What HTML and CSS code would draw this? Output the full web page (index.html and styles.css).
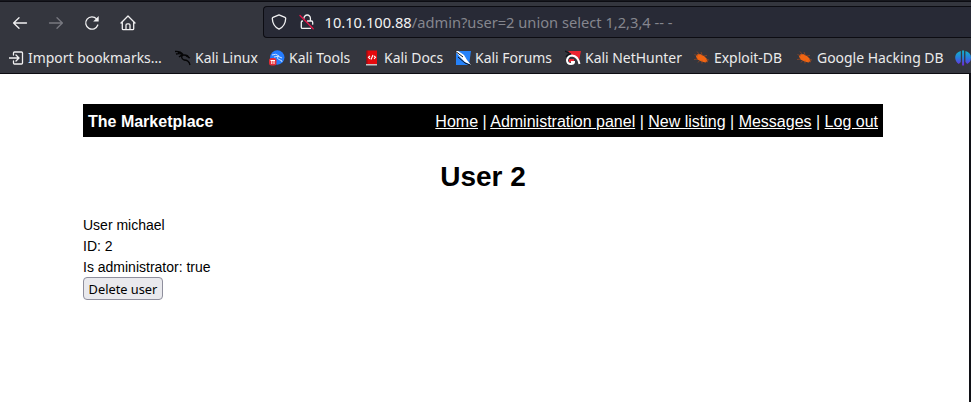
FILE: index.html
```html
<!DOCTYPE html>
<html lang="en">
<head>
<meta charset="utf-8">
<title>User 2</title>
<link rel="stylesheet" href="styles.css">
</head>
<body>
<svg class="defs" width="0" height="0" aria-hidden="true">
  <symbol id="bug" viewBox="0 0 16 16">
    <path d="M3 4.500l3-.5 4 2 3 3 .5 2.500-2 1-4-1-4-2-1.500-3z" fill="#f26512"/>
    <path d="M3 1.500l2.500 3M7 2l1.500 4M.5 4.500L4 6M10 6l3-.5M12 9.500l3 .5M0 9.500l4-.5M4 12.500l2-2.500M8 13.500v-3M11.500 11l2.500 1" stroke="#a34a20" stroke-width=".7" fill="none"/>
  </symbol>
</svg>
<div class="browser">
  <div class="tabs"></div>
  <div class="toolbar">
    <div class="controls">
      <svg width="16" height="16" viewBox="0 0 16 16" class="line"><path d="M14.500 8H1.800M7 2.700L1.600 8 7 13.300"/></svg>
      <svg width="16" height="16" viewBox="0 0 16 16" class="line dim"><path d="M1.500 8h12.700M9 2.700L14.400 8 9 13.300"/></svg>
      <svg width="16" height="16" viewBox="0 0 16 16" class="line"><path d="M13.800 10A6.200 6.200 0 1 1 12.600 3.900"/><path class="solid" d="M14.700 1v5.500H9.200z"/></svg>
      <svg width="16" height="16" viewBox="0 0 16 16" class="line"><path d="M1 8l7-7 7 7M2.300 7v6.700q0 1 1 1h9.400q1 0 1-1V7M6 14.500V10q0-1.200 1.200-1.200h1.600Q10 8.800 10 10v4.500"/></svg>
    </div>
    <div class="urlbar">
      <svg width="16" height="16" viewBox="0 0 16 16" class="line"><path d="M8 .9l6 2.400q.7.300.7 1.200C14.500 9.500 12 13.200 8 15.200 4 13.200 1.500 9.500 1.300 4.500q0-.9.700-1.200z"/></svg>
      <svg width="16" height="16" viewBox="0 0 16 16" class="line lock"><path d="M5 4.200a3.200 3.200 0 0 1 6.400 0V7M8.500 7H12.500q1.200 0 1.200 1.200v2M3.500 7q-1.200.2-1.200 1.200v5q0 1.200 1.200 1.200h8"/><path class="slash" d="M1 1.500L14.200 14.800"/></svg>
      <div class="url"><span class="host">10.10.100.88</span>/admin?user=2 union select 1,2,3,4 -- -</div>
    </div>
  </div>
  <div class="bookmarks">
    <div class="bm import"><svg width="16" height="16" viewBox="0 0 16 16" class="line"><path d="M4.500 5V3q0-1 1-1h7q1 0 1 1v10q0 1-1 1h-7q-1 0-1-1v-2M0 8h9.500M7 5l3 3-3 3"/></svg><span>Import bookmarks…</span></div>
    <div class="bm"><svg width="16" height="16" viewBox="0 0 16 16"><path d="M0 1.500Q5 1 8 4.500M1 4q4-1 7 .5M4 7q2-2 5-2 4 0 5 3M8 4.500Q5 8 9 10q5 0 6 5M11 6l4 2M3 3l3-1" fill="none" stroke="#050506" stroke-width="1.300"/></svg><span>Kali Linux</span></div>
    <div class="bm"><svg width="16" height="16" viewBox="0 0 16 16"><circle cx="8.300" cy="7.500" r="7.200" fill="#247cff"/><path d="M3 5q4-2 7 1M5 7q4-2 8 1M9 6q-2 3 2 4 2 0 2 2" fill="none" stroke="#cbe1ff" stroke-width="1"/><rect y="8" width="7.500" height="7.500" rx="2.500" fill="#e32b35"/><path d="M1.500 10.500H6M2.800 10.500V14M5 10.500V14" stroke="#fff" stroke-width="1"/></svg><span>Kali Tools</span></div>
    <div class="bm"><svg width="16" height="16" viewBox="0 0 16 16"><path d="M2 .5h2V14H2z" fill="#8c1118"/><path d="M3.500.5H13V14H3.500z" fill="#e5090d"/><path d="M2 14h11v1.500H2z" fill="#c9c5c7"/><path d="M6 5.800L4.500 7.300l1.500 1.500M10 5.800l1.500 1.500-1.500 1.500M7 9.500l2-4.500" fill="none" stroke="#fff" stroke-width="1.100"/></svg><span>Kali Docs</span></div>
    <div class="bm"><svg width="16" height="16" viewBox="0 0 16 16"><path d="M1 1h15l-2 14H1z" fill="#2582fa"/><path d="M0 1l3 0 6 4 3 5 4 5-6-3-5-5z" fill="#fff"/><path d="M0 1l8 6M3 7l7 6 5 2" stroke="#111318" stroke-width="1" fill="none"/></svg><span>Kali Forums</span></div>
    <div class="bm"><svg width="16" height="16" viewBox="0 0 16 16"><path d="M3 1h13l-2 10-6-5z" fill="#ed2430"/><path d="M0 1l4 2M1 7q2-3 5-3" stroke="#111318" stroke-width="1.300" fill="none"/><path d="M4 9h5v3H4z" fill="#ed2430"/><path d="M14.500 14Q13 6 7 5.500q-4 .2-5 4.500 0 4 4 4 3 0 3-2H6" fill="none" stroke="#fff" stroke-width="2"/></svg><span>Kali NetHunter</span></div>
    <div class="bm"><svg width="16" height="16"><use href="#bug"/></svg><span>Exploit-DB</span></div>
    <div class="bm"><svg width="16" height="16"><use href="#bug"/></svg><span>Google Hacking DB</span></div>
    <div class="bm"><svg width="16" height="16" viewBox="0 0 16 16"><defs><linearGradient id="g" x2="0" y2="1"><stop stop-color="#12b5c9"/><stop offset=".5" stop-color="#287cdd"/><stop offset="1" stop-color="#7026df"/></linearGradient></defs><path d="M5.800 1v11l-2 2Q0 11.500.2 7 .5 2.500 5.800 1zM7.100 .5h2V15.500h-2zM10.400 1Q16 2.500 16 7.500q0 4.500-3.800 6.500l-1.800-2z" fill="url(#g)"/></svg></div>
  </div>
</div>
<div class="viewport">
  <main class="page">
    <nav class="nav">
      <strong>The Marketplace</strong>
      <div class="links"><a href="#">Home</a> | <a href="#">Administration panel</a> | <a href="#">New listing</a> | <a href="#">Messages</a> | <a href="#">Log out</a></div>
    </nav>
    <h1>User 2</h1>
    <div class="details">
      <div>User michael</div>
      <div>ID: 2</div>
      <div>Is administrator: true</div>
    </div>
    <button class="delete">Delete user</button>
  </main>
</div>
</body>
</html>
```
FILE: styles.css
```css
* { box-sizing: border-box; }
body {
  margin: 0;
  height: 402px;
  overflow: hidden;
  background: #fff;
  color: #000;
  font-family: "Liberation Sans", sans-serif;
}
svg { display: block; flex: none; }
.defs { position: absolute; }
.browser {
  height: 74px;
  overflow: hidden;
  background: #34363e;
  color: #ebebeb;
  font-family: "Noto Sans", sans-serif;
  border-bottom: 1px solid #0c0c12;
}
.tabs { height: 2px; background: #16171d; border-bottom: 1px solid #0c0c12; }
.toolbar { height: 40px; display: flex; padding-top: 4px; }
.controls { width: 263px; display: flex; gap: 20px; padding: 9px 0 0 12px; }
.line { fill: none; stroke: #f1f1f2; stroke-width: 1.3; stroke-linecap: round; stroke-linejoin: round; }
.dim { stroke: #787980; }
.line .solid { fill: #f1f1f2; stroke: none; }
.line .slash { stroke: #e51648; stroke-width: 1.4; }
.urlbar {
  flex: 1;
  height: 32px;
  display: flex;
  align-items: center;
  padding-left: 7px;
  background: #282a36;
  border: 1px solid #0c0c12;
  border-right: 0;
  border-radius: 4px 0 0 4px;
}
.lock { margin-left: 12px; }
.url { margin-left: 9.5px; font-size: 14.67px; line-height: 20px; color: #85868e; white-space: pre; }
.host { color: #f3f3f3; }
.bookmarks {
  display: grid;
  grid-template-columns: 166px 94px 95px 91px 110px 129px 103px 158px 16px;
  height: 31px;
  padding-left: 9px;
  align-items: center;
}
.bm { display: flex; align-items: center; gap: 4px; font-size: 13.95px; line-height: 20px; white-space: nowrap; }
.bm span { margin-top: 1px; }
.import { gap: 3px; }
.viewport { height: 328px; border-right: 2px solid #101116; }
.page { width: 800px; margin-left: 83px; padding-top: 30px; }
.nav {
  height: 33px;
  display: flex;
  align-items: center;
  justify-content: space-between;
  padding: 2px 5px 0;
  background: #000;
  color: #fff;
  font-size: 16px;
  line-height: 23px;
}
.nav a { color: inherit; text-decoration: underline; }
h1 { margin: 23px 0 0; font-size: 28px; line-height: 34px; text-align: center; }
.details { margin-top: 21px; font-size: 14px; line-height: 21px; }
.delete {
  display: block;
  width: 80px;
  height: 23px;
  margin-top: -1px;
  padding: 1px 0 0;
  border: 1px solid #8f8f9d;
  border-radius: 4px;
  background: #e9e9ed;
  color: #000;
  font: 12.8px/20px "Noto Sans", sans-serif;
}
```
